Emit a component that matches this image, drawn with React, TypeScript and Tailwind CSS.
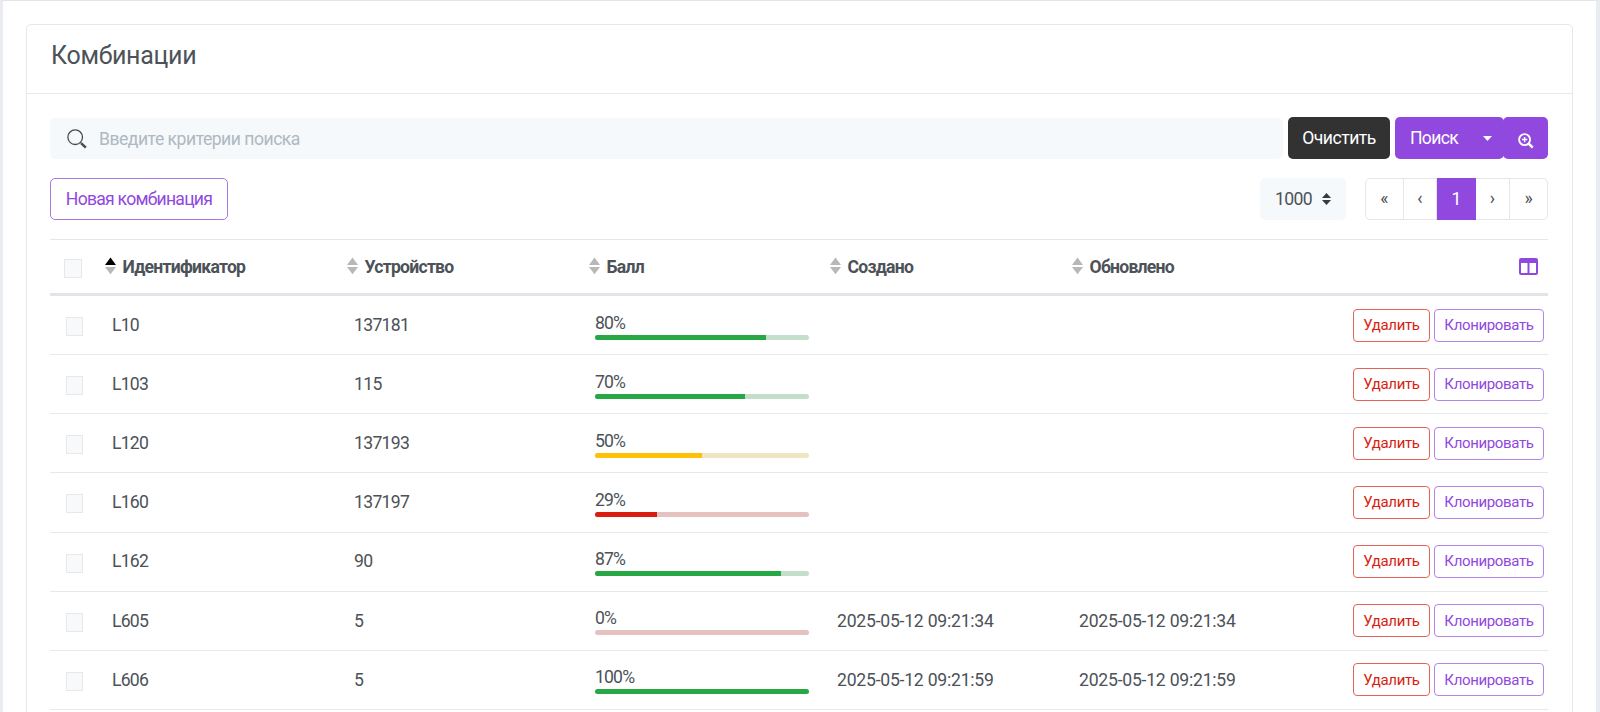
import { clsx } from "clsx";

type Row = {
  id: string;
  device: string;
  score: number;
  created?: string;
  updated?: string;
};

const columns = ["Идентификатор", "Устройство", "Балл", "Создано", "Обновлено"];

const rows: Row[] = [
  { id: "L10", device: "137181", score: 80 },
  { id: "L103", device: "115", score: 70 },
  { id: "L120", device: "137193", score: 50 },
  { id: "L160", device: "137197", score: 29 },
  { id: "L162", device: "90", score: 87 },
  { id: "L605", device: "5", score: 0, created: "2025-05-12 09:21:34", updated: "2025-05-12 09:21:34" },
  { id: "L606", device: "5", score: 100, created: "2025-05-12 09:21:59", updated: "2025-05-12 09:21:59" },
];

const grid = "grid grid-cols-[48px_242px_242px_241px_242px_242px_1fr]";

const SearchIcon = () => (
  <svg className="h-5 w-5 shrink-0" viewBox="0 0 20 20" fill="none" stroke="#4a4a4a">
    <circle cx="8.2" cy="8.2" r="7.3" strokeWidth="1.3" />
    <path d="M13.4 13.4l1.4 1.4" strokeWidth="1.3" />
    <path d="M14.3 14.3l4.5 4.3" strokeWidth="2.5" />
  </svg>
);

const ZoomInIcon = () => (
  <svg className="mt-[5px] h-4 w-4" viewBox="0 0 16 16" fill="none" stroke="white">
    <circle cx="6.6" cy="6.6" r="5.5" strokeWidth="1.9" />
    <path d="M6.6 3.9v5.4M3.9 6.6h5.4" strokeWidth="1.5" />
    <path d="M10.7 10.7l4 4" strokeWidth="2.6" />
  </svg>
);

const ColumnsIcon = () => (
  <svg className="h-[17px] w-[19px]" viewBox="0 0 19 17" fill="none" stroke="#9048de">
    <rect x="1" y="1" width="17" height="15" rx="1" strokeWidth="2" />
    <path d="M1 3h17" strokeWidth="4" />
    <path d="M9.5 4v12" strokeWidth="2" />
  </svg>
);

const SortIcon = ({ active }: { active?: boolean }) => (
  <svg className="mr-2 h-[18px] w-[11px] shrink-0" viewBox="0 0 11 18">
    <path d="M5.5 0.5L11 8H0z" fill={active ? "#000" : "#b8b8b8"} />
    <path d="M5.5 17.3L11 10H0z" fill="#b8b8b8" />
  </svg>
);

const Checkbox = ({ header }: { header?: boolean }) => (
  <span
    className={clsx(
      "block h-[19px] border border-[#e6e8eb] bg-[#f8f9fb]",
      header ? "ml-3.5 mt-[3px] w-[18px]" : "ml-4 mt-[3px] w-[17px]"
    )}
  />
);

const barColor = (score: number) => {
  if (score >= 70) return { bar: "bg-[#28a745]", track: "bg-[#c3dfcb]" };
  if (score >= 50) return { bar: "bg-[#ffc107]", track: "bg-[#eee5c1]" };
  return { bar: "bg-[#d91e10]", track: "bg-[#e5c2c0]" };
};

const Score = ({ value }: { value: number }) => {
  const { bar, track } = barColor(value);
  return (
    <div className="mt-px w-[214px]">
      <div className="h-[23px] leading-[22px] tracking-[-0.85px]">{value}%</div>
      <div className={clsx("h-[5px] overflow-hidden rounded-full", track)}>
        <div className={clsx("h-full", bar)} style={{ width: `${value}%` }} />
      </div>
    </div>
  );
};

const pageItem = "flex items-center justify-center border-r border-[#e3e6ea] pb-0.5";

export default function App() {
  return (
    <div className="h-[712px] overflow-hidden border-t border-r-4 border-l-[3px] border-t-[#e2e4e5] border-r-[#e9edf1] border-l-[#e9edf1] bg-white px-[23px] pt-[23px] font-['Roboto','Liberation_Sans',sans-serif] text-[17.6px] text-[#4c5258]">
      <div className="h-[740px] w-[1547px] rounded-[5px] border border-[#e6e8ea]">
        <div className="flex h-[69px] items-center border-b border-[#e6e8ea] pb-1.5 pl-6">
          <h1 className="text-[25px] tracking-[-0.3px]">Комбинации</h1>
        </div>

        <div className="pt-[23px] pr-6 pl-[23px]">
          <div className="mt-px flex h-[42px]">
            <div className="flex h-[41px] w-[1233px] items-center rounded-[5px] bg-[#f5f9fc] pl-[17px]">
              <SearchIcon />
              <span className="mt-0.5 ml-3 tracking-[-0.5px] text-[#b0b8c0]">Введите критерии поиска</span>
            </div>
            <button className="-mt-px ml-[5px] h-[42px] w-[102px] rounded-[5px] bg-[#323232] pt-px tracking-[-0.5px] text-white">
              Очистить
            </button>
            <button className="-mt-px ml-[5px] flex h-[42px] w-[109px] items-center rounded-[5px] bg-[#9048de] pl-[15px] tracking-[-0.7px] text-white">
              Поиск
              <svg className="ml-auto mr-3 h-[5px] w-[9px]" viewBox="0 0 9 5">
                <path d="M0 0h9L4.5 5z" fill="white" />
              </svg>
            </button>
            <button className="-mt-px -ml-px flex h-[42px] w-[45px] items-center justify-center rounded-[5px] bg-[#9048de]">
              <ZoomInIcon />
            </button>
          </div>

          <div className="mt-[18px] flex h-[42px]">
            <button className="w-[178px] rounded-[5px] border border-[#ac76e6] tracking-[-0.75px] text-[#9048de]">
              Новая комбинация
            </button>
            <div className="ml-auto flex w-[86px] items-center rounded-[5px] bg-[#f5f9fc] pl-[15px]">
              <span className="mt-px tracking-[-0.6px]">1000</span>
              <svg className="ml-auto mr-[15px] h-3 w-[9px]" viewBox="0 0 9 12" fill="#343a40">
                <path d="M4.5 0L9 5H0zM4.5 12L9 7H0z" />
              </svg>
            </div>
            <div className="ml-[19px] flex w-[183px] rounded-[5px] border border-[#e3e6ea]">
              <span className={clsx(pageItem, "w-[38px]")}>«</span>
              <span className={clsx(pageItem, "w-[33px]")}>‹</span>
              <span className="-my-px flex w-[39px] items-center justify-center bg-[#9048de] text-white">1</span>
              <span className={clsx(pageItem, "w-[34px]")}>›</span>
              <span className="flex flex-1 items-center justify-center pb-0.5">»</span>
            </div>
          </div>

          <div className="mt-[19px] border-t border-[#e3e6ea]">
            <div className={clsx(grid, "h-[56px] items-center border-b-[3px] border-[#e1e5e9]")}>
              <Checkbox header />
              {columns.map((name, i) => (
                <div key={name} className="flex items-center pl-[6.5px]">
                  <SortIcon active={i === 0} />
                  <span className="mt-0.5 -ml-px font-bold tracking-[-0.75px]">{name}</span>
                </div>
              ))}
              <div className="flex justify-end pr-2.5">
                <ColumnsIcon />
              </div>
            </div>

            {rows.map((row) => (
              <div key={row.id} className={clsx(grid, "h-[59.15px] items-center border-b border-[#e6e8ea]")}>
                <Checkbox />
                <div className="pl-3.5 tracking-[-0.75px]">{row.id}</div>
                <div className="pl-3.5 tracking-[-0.7px]">{row.device}</div>
                <div className="pl-[13px]">
                  <Score value={row.score} />
                </div>
                <div className="pl-3.5 tracking-[-0.23px]">{row.created}</div>
                <div className="pl-3.5 tracking-[-0.23px]">{row.updated}</div>
                <div className="flex justify-end gap-1 pr-1 text-[15px]">
                  <button className="h-[33px] w-[77px] rounded-[4px] border border-[#e4645a] tracking-[-0.35px] text-[#d91e10]">
                    Удалить
                  </button>
                  <button className="h-[33px] w-[110px] rounded-[4px] border border-[#b485e9] tracking-[-0.35px] text-[#9048de]">
                    Клонировать
                  </button>
                </div>
              </div>
            ))}
          </div>
        </div>
      </div>
    </div>
  );
}
